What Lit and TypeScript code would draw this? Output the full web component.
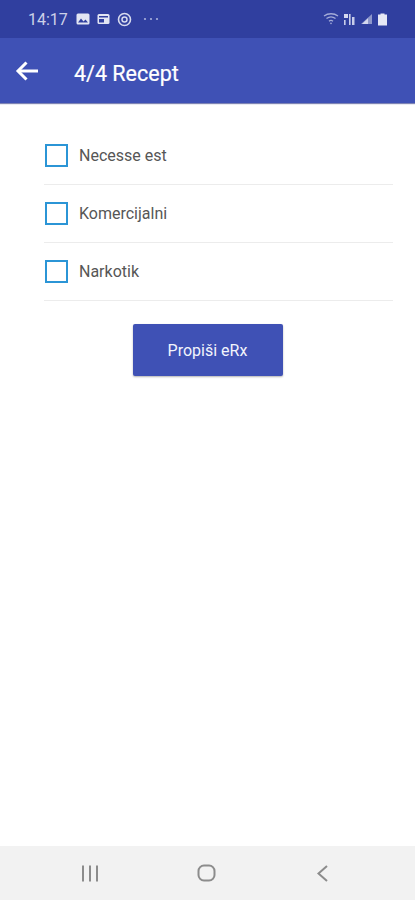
import { LitElement, html, css, svg } from "lit";
import { customElement } from "lit/decorators.js";

const options = ["Necesse est", "Komercijalni", "Narkotik"];

@customElement("app-root")
export class AppRoot extends LitElement {
  static styles = css`
    :host {
      display: flex;
      flex-direction: column;
      height: 900px;
      background: #fff;
      font-family: Roboto, "Liberation Sans", sans-serif;
    }

    .status {
      height: 38px;
      box-sizing: border-box;
      background: #303f9f;
      color: #ccd1e8;
      display: flex;
      align-items: center;
      padding: 0 27px 0 28px;
      font-size: 16px;
      flex: none;
    }

    .status .left {
      display: flex;
      align-items: center;
      gap: 7px;
    }

    .status .time {
      margin-right: 1px;
    }

    .status .dots {
      margin-left: 3px;
    }

    .status .right {
      margin-left: auto;
      display: flex;
      align-items: center;
      gap: 4px;
    }

    .appbar {
      height: 65px;
      box-sizing: border-box;
      background: #3f51b5;
      color: #fff;
      display: flex;
      align-items: center;
      gap: 35px;
      padding: 0 15px;
      flex: none;
      box-shadow: 0 1px 1px rgba(40, 50, 130, 0.6);
    }

    .appbar h1 {
      margin: 5px 0 0;
      font-size: 21.5px;
      font-weight: 400;
      -webkit-text-stroke: 0.2px #fff;
    }

    .appbar svg {
      margin-top: 0;
    }

    .form {
      flex: 1;
      padding-top: 24px;
      display: flex;
      flex-direction: column;
    }

    .options {
      margin: 0 22px 0 44px;
    }

    .row {
      height: 58px;
      display: flex;
      align-items: center;
      gap: 11px;
      border-bottom: 1.5px solid #ececec;
      color: #565656;
      font-size: 16px;
      box-sizing: border-box;
    }

    .box {
      width: 19px;
      height: 19px;
      border: 2px solid #2b95d6;
      margin-left: 1px;
      flex: none;
    }

    button {
      align-self: center;
      margin-top: 23px;
      width: 150px;
      height: 52px;
      background: #3f51b5;
      color: #f2f4fc;
      border: none;
      border-radius: 2px;
      font: 400 16px Roboto, "Liberation Sans", sans-serif;
      box-shadow: 0 1px 2px rgba(0, 0, 0, 0.3);
    }

    .nav {
      height: 54px;
      background: #f2f2f2;
      flex: none;
      display: flex;
      align-items: center;
      justify-content: space-between;
      padding: 0 83.5px 0 81px;
    }
  `;

  private statusIcons() {
    return html`
      <svg width="14" height="12" viewBox="0 0 14 12">
        <rect x="0.5" y="0.5" width="13" height="11" rx="1.5" fill="#e2e5f3" />
        <path d="M2 9.5l3-4 2.5 3 2-2 2.5 3z" fill="#303f9f" />
      </svg>
      <svg width="13" height="12" viewBox="0 0 13 12">
        <rect x="0.5" y="1" width="12" height="10" rx="1.5" fill="#e2e5f3" />
        <rect x="2" y="3" width="9" height="1.5" fill="#303f9f" />
        <rect x="2" y="6" width="5" height="3.5" fill="#303f9f" />
      </svg>
      <svg width="15" height="15" viewBox="0 0 15 15" fill="none" stroke="#d6daee">
        <circle cx="7.5" cy="7.5" r="6" stroke-width="1.6" />
        <circle cx="7.5" cy="7.5" r="2.5" stroke-width="1.5" />
      </svg>
      <svg class="dots" width="18" height="4" viewBox="0 0 18 4" fill="#aab2db">
        <circle cx="3" cy="2" r="1.1" />
        <circle cx="9" cy="2" r="1.1" />
        <circle cx="15" cy="2" r="1.1" />
      </svg>
    `;
  }

  private signalIcons() {
    return html`
      <svg width="16" height="12" viewBox="0 0 16 12" fill="none" stroke="#a4acd8" stroke-width="1.3">
        <path d="M1 3c4-3 10-3 14 0" />
        <path d="M3.5 5.6c2.6-2 6.4-2 9 0" />
        <path d="M6 8.2c1.3-1 2.7-1 4 0" />
        <circle cx="8" cy="10.4" r="0.8" fill="#a4acd8" stroke="none" />
      </svg>
      <svg width="13" height="13" viewBox="0 0 13 13" fill="#c8cdea">
        <rect x="1" y="1" width="4" height="4" fill="#d5d9ef" />
        <rect x="1" y="7" width="1.6" height="5" />
        <rect x="6" y="1" width="1.6" height="11" />
        <rect x="9" y="4" width="2.5" height="8" />
      </svg>
      <svg width="13" height="12" viewBox="0 0 13 12">
        <path d="M12 1v10H1z" fill="#8e97cb" />
        <path d="M8 5.2V11H2z" fill="#d4d8ee" />
      </svg>
      <svg width="11" height="14" viewBox="0 0 11 14">
        <path d="M3.5 1.5h4v1H10v11H1v-11h2.5z" fill="#e6e8f5" />
      </svg>
    `;
  }

  private navIcons() {
    return svg`
      <svg width="19" height="17" viewBox="0 0 19 17" fill="#8c8c8c">
        <rect x="1" y="0.5" width="2" height="16" />
        <rect x="8" y="0.5" width="2" height="16" />
        <rect x="15" y="0.5" width="2" height="16" />
      </svg>
      <svg width="19" height="18" viewBox="0 0 19 18" fill="none" stroke="#8c8c8c" stroke-width="2">
        <rect x="1.5" y="1.5" width="16" height="15" rx="5.5" />
      </svg>
      <svg width="19" height="17" viewBox="-3.5 0 19 17" fill="none" stroke="#8c8c8c" stroke-width="2">
        <path d="M10.5 1L2 8.5l8.5 7.5" />
      </svg>
    `;
  }

  render() {
    return html`
      <div class="status">
        <div class="left">
          <span class="time">14:17</span>
          ${this.statusIcons()}
        </div>
        <div class="right">${this.signalIcons()}</div>
      </div>
      <div class="appbar">
        <svg width="24" height="20" viewBox="0 0 24 20" fill="none" stroke="#fff" stroke-width="3">
          <path d="M23 10H3" />
          <path d="M11.5 1.5L3 10l8.5 8.5" />
        </svg>
        <h1>4/4 Recept</h1>
      </div>
      <div class="form">
        <div class="options">
          ${options.map(
            (label) => html`
              <div class="row">
                <span class="box"></span>
                <span>${label}</span>
              </div>
            `
          )}
        </div>
        <button>Propiši eRx</button>
      </div>
      <div class="nav">${this.navIcons()}</div>
    `;
  }
}
